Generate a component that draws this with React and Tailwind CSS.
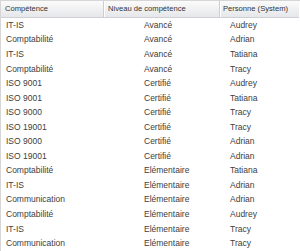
const rows = [
  ["IT-IS", "Avancé", "Audrey"],
  ["Comptabilité", "Avancé", "Adrian"],
  ["IT-IS", "Avancé", "Tatiana"],
  ["Comptabilité", "Avancé", "Tracy"],
  ["ISO 9001", "Certifié", "Audrey"],
  ["ISO 9001", "Certifié", "Tatiana"],
  ["ISO 9000", "Certifié", "Tracy"],
  ["ISO 19001", "Certifié", "Tracy"],
  ["ISO 9000", "Certifié", "Adrian"],
  ["ISO 19001", "Certifié", "Adrian"],
  ["Comptabilité", "Elémentaire", "Tatiana"],
  ["IT-IS", "Elémentaire", "Adrian"],
  ["Communication", "Elémentaire", "Adrian"],
  ["Comptabilité", "Elémentaire", "Audrey"],
  ["IT-IS", "Elémentaire", "Tracy"],
  ["Communication", "Elémentaire", "Tracy"],
];

export default function App() {
  return (
    <div
      className="w-[300px] h-[251px] overflow-hidden bg-white border-l border-t border-[#d6d6d6] text-[8.5px] text-[#404040] whitespace-nowrap"
      style={{ fontFamily: '"Liberation Sans", Arial, sans-serif' }}
    >
      <div className="flex h-[17px] w-[298px] bg-gradient-to-b from-[#fbfbfb] to-[#e6e7ea] border-b border-[#cfd0d4] text-[#333] text-[7.6px]">
        <div className="w-[103px] flex items-center pl-[4px] border-r border-[#cdcdd2]">Compétence</div>
        <div className="w-[116px] flex items-center pl-[3px] border-l border-white border-r border-r-[#cdcdd2]">Niveau de compétence</div>
        <div className="flex-1 flex items-center pl-[2px] border-l border-white">Personne (System)</div>
      </div>
      {rows.map((r, i) => (
        <div key={i} className="flex h-[14.55px] items-center">
          <div className="w-[104px] pl-[5px]">{r[0]}</div>
          <div className="w-[116px] pl-[39px]">{r[1]}</div>
          <div className="flex-1 pl-[9px]">{r[2]}</div>
        </div>
      ))}
    </div>
  );
}
